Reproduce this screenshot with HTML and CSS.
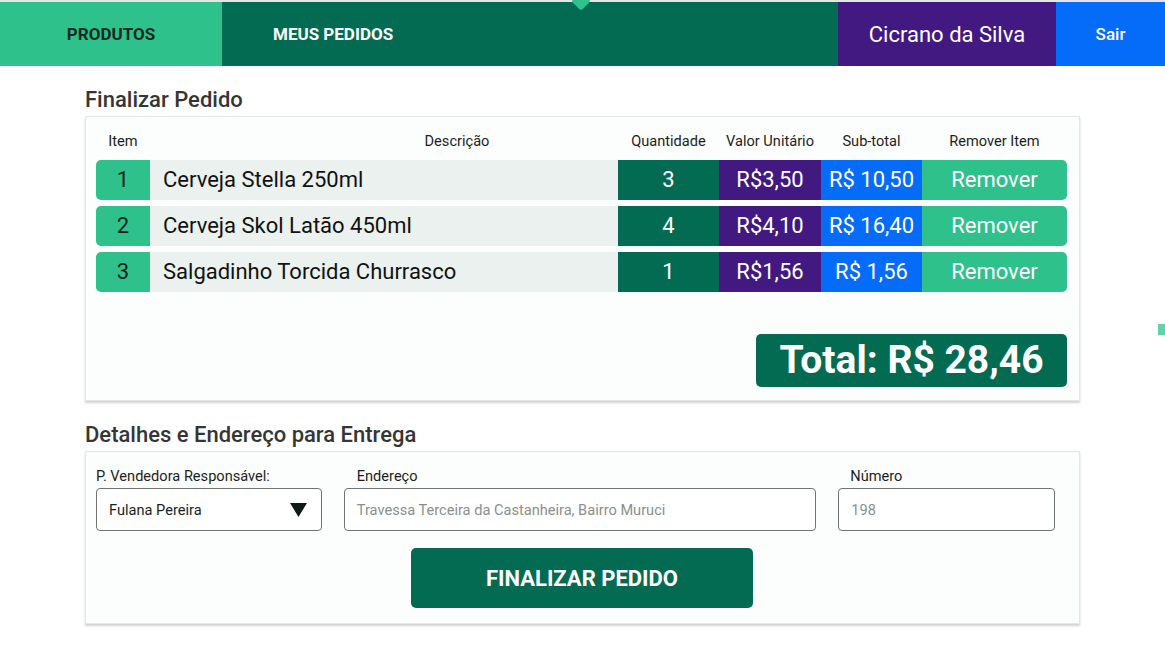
FILE: index.html
```html
<!DOCTYPE html>
<html lang="pt-BR">
<head>
<meta charset="utf-8">
<title>Finalizar Pedido</title>
<link rel="stylesheet" href="styles.css">
</head>
<body>
<div class="topstrip"></div>
<div class="dot"></div>
<nav class="nav">
  <a class="nav-item nav-products">PRODUTOS</a>
  <a class="nav-item nav-orders">MEUS PEDIDOS</a>
  <span class="nav-item nav-user">Cicrano da Silva</span>
  <a class="nav-item nav-exit">Sair</a>
</nav>
<div class="side-mark"></div>
<main class="main">
  <h2 class="title">Finalizar Pedido</h2>
  <section class="card card-order">
    <div class="grid head">
      <div>Item</div>
      <div class="h-desc">Descrição</div>
      <div>Quantidade</div>
      <div>Valor Unitário</div>
      <div>Sub-total</div>
      <div>Remover Item</div>
    </div>
    <div class="grid row">
      <div class="c-item">1</div>
      <div class="c-desc">Cerveja Stella 250ml</div>
      <div class="c-qty">3</div>
      <div class="c-unit">R$3,50</div>
      <div class="c-sub">R$ 10,50</div>
      <div class="c-rem">Remover</div>
    </div>
    <div class="grid row">
      <div class="c-item">2</div>
      <div class="c-desc">Cerveja Skol Latão 450ml</div>
      <div class="c-qty">4</div>
      <div class="c-unit">R$4,10</div>
      <div class="c-sub">R$ 16,40</div>
      <div class="c-rem">Remover</div>
    </div>
    <div class="grid row">
      <div class="c-item">3</div>
      <div class="c-desc">Salgadinho Torcida Churrasco</div>
      <div class="c-qty">1</div>
      <div class="c-unit">R$1,56</div>
      <div class="c-sub">R$ 1,56</div>
      <div class="c-rem">Remover</div>
    </div>
    <div class="total-wrap">
      <div class="total">Total: R$ 28,46</div>
    </div>
  </section>

  <h2 class="title title2">Detalhes e Endereço para Entrega</h2>
  <section class="card card-details">
    <div class="fields">
      <div class="field f-seller">
        <label class="label">P. Vendedora Responsável:</label>
        <div class="select">
          <span>Fulana Pereira</span>
          <svg class="caret" width="17" height="14" viewBox="0 0 17 14"><path d="M0 0 H17 L8.5 14 Z" fill="#0d1a15"/></svg>
        </div>
      </div>
      <div class="field f-address">
        <label class="label label-in">Endereço</label>
        <div class="input placeholder">Travessa Terceira da Castanheira, Bairro Muruci</div>
      </div>
      <div class="field f-number">
        <label class="label label-in2">Número</label>
        <div class="input placeholder">198</div>
      </div>
    </div>
    <div class="btn-wrap">
      <button class="btn">FINALIZAR PEDIDO</button>
    </div>
  </section>
</main>
</body>
</html>
```

FILE: styles.css
```css
* { box-sizing: border-box; }
html, body { margin: 0; padding: 0; }
body {
  font-family: Roboto, "Noto Sans", Arial, sans-serif;
  background: #ffffff;
  color: #1d1d1d;
  width: 1165px;
  height: 655px;
  overflow: hidden;
  position: relative;
}
.topstrip { height: 2px; background: #e4e6e5; }
.dot {
  position: absolute;
  left: 574px;
  top: -6px;
  width: 14px;
  height: 14px;
  background: #2fc18c;
  transform: rotate(45deg);
  border-radius: 3px;
  z-index: 2;
}
.nav {
  display: flex;
  height: 64px;
  background: #036b52;
}
.nav-item {
  display: flex;
  align-items: center;
  height: 100%;
  text-decoration: none;
}
.nav-products {
  width: 222px;
  justify-content: center;
  background: #2fc18c;
  color: #0f2a20;
  font-weight: 700;
  font-size: 17px;
}
.nav-orders {
  flex: 1;
  padding-left: 51px;
  color: #ffffff;
  font-weight: 700;
  font-size: 17px;
}
.nav-user {
  width: 218px;
  justify-content: center;
  background: #421981;
  color: #ffffff;
  font-size: 22px;
}
.nav-exit {
  width: 109px;
  justify-content: center;
  background: #056cf9;
  color: #ffffff;
  font-weight: 500;
  font-size: 17px;
}
.side-mark {
  position: absolute;
  left: 1158px;
  top: 324px;
  width: 7px;
  height: 11px;
  background: #5fd4a8;
}
.main {
  padding-left: 85px;
  width: 1080px;
}
.title {
  margin: 0;
  padding-top: 21px;
  height: 50px;
  font-size: 22px;
  font-weight: 500;
  color: #353535;
  line-height: 26px;
}
.card {
  background: #fbfefd;
  border: 1px solid #e3e7e5;
  box-shadow: 0 2px 2px rgba(0,0,0,0.18);
}
.card-order {
  height: 285px;
  padding: 10px 12px 0 10px;
}
.grid {
  display: grid;
  grid-template-columns: 54px 468px 101px 102px 101px 145px;
}
.head {
  height: 33px;
  font-size: 14.6px;
  color: #1d1d1d;
  align-items: center;
  text-align: center;
  padding-bottom: 5px;
}
.h-desc { padding-left: 146px; }
.row {
  height: 40px;
  margin-bottom: 6px;
  font-size: 22px;
  line-height: 40px;
  text-align: center;
}
.c-item { background: #2fc18c; color: #10231c; border-radius: 5px 0 0 5px; }
.c-desc { background: #eaf1ef; color: #111; text-align: left; padding-left: 13px; }
.c-qty { background: #036b52; color: #fff; }
.c-unit { background: #421981; color: #fff; }
.c-sub { background: #056cf9; color: #fff; }
.c-rem { background: #2fc18c; color: #fff; border-radius: 0 5px 5px 0; }
.total-wrap {
  display: flex;
  justify-content: flex-end;
  padding-top: 36px;
}
.total {
  width: 311px;
  height: 53px;
  background: #036b52;
  color: #ffffff;
  border-radius: 5px;
  font-weight: 700;
  font-size: 39px;
  line-height: 53px;
  text-align: center;
}
.card-details {
  height: 173px;
  padding: 14px 24px 0 10px;
}
.fields {
  display: flex;
  gap: 22px;
}
.field { display: flex; flex-direction: column; }
.f-seller { width: 226px; }
.f-address { width: 473px; }
.f-number { width: 217px; }
.label {
  font-size: 14.6px;
  color: #1d1d1d;
  height: 22px;
  line-height: 20px;
}
.label-in { padding-left: 13px; }
.label-in2 { padding-left: 12px; }
.select, .input {
  height: 43px;
  border: 1px solid #6d7472;
  border-radius: 4px;
  background: #ffffff;
  display: flex;
  align-items: center;
  font-size: 14.6px;
  padding-left: 12px;
}
.select { justify-content: space-between; padding-right: 14px; color: #1d1d1d; }
.placeholder { color: #8a8f8d; }
.btn-wrap {
  display: flex;
  padding-left: 315px;
  padding-top: 17px;
}
.btn {
  width: 342px;
  height: 60px;
  border: none;
  border-radius: 5px;
  background: #036b52;
  color: #ffffff;
  font-family: Roboto, "Noto Sans", Arial, sans-serif;
  font-weight: 700;
  font-size: 22px;
}
```
